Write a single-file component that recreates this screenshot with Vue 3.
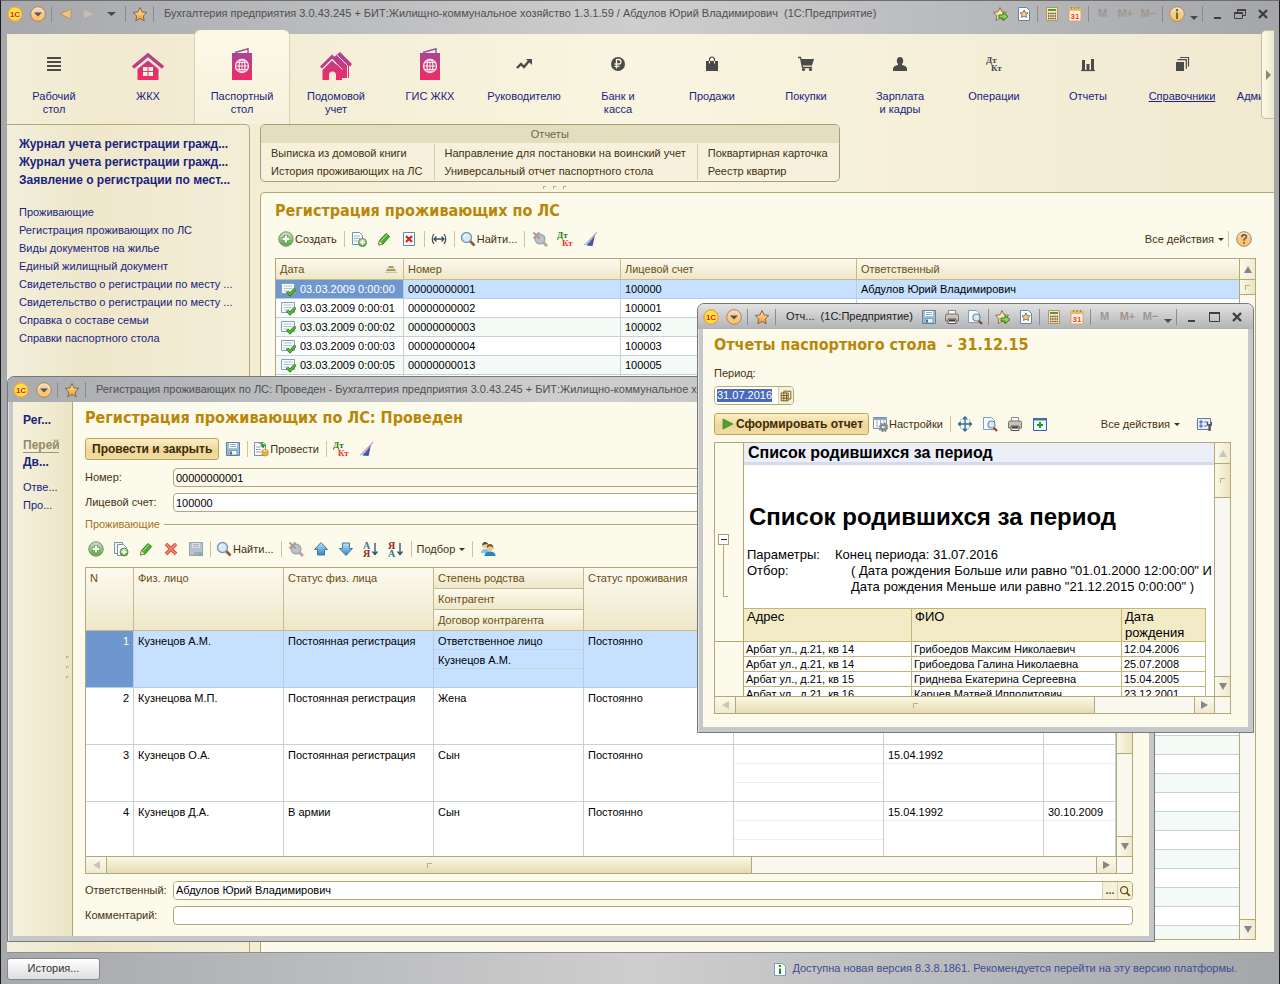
<script setup>
import { ref, onMounted } from 'vue'

const sections = [
  { title: 'Рабочий\nстол', icon: 'desk' },
  { title: 'ЖКХ', icon: 'house', big: true },
  { title: 'Паспортный\nстол', icon: 'passport', big: true, active: true },
  { title: 'Подомовой\nучет', icon: 'houses', big: true },
  { title: 'ГИС ЖКХ', icon: 'passport', big: true },
  { title: 'Руководителю', icon: 'trend' },
  { title: 'Банк и\nкасса', icon: 'ruble' },
  { title: 'Продажи', icon: 'bag' },
  { title: 'Покупки', icon: 'cart' },
  { title: 'Зарплата\nи кадры', icon: 'person' },
  { title: 'Операции', icon: 'dtkt-dark' },
  { title: 'Отчеты', icon: 'chart' },
  { title: 'Справочники', icon: 'books', hover: true },
  { title: 'Администриро-\nвание', icon: '' }
]

const mainLinks = [
  'Журнал учета регистрации гражд...',
  'Журнал учета регистрации гражд...',
  'Заявление о регистрации по мест...'
]
const links = [
  'Проживающие',
  'Регистрация проживающих по ЛС',
  'Виды документов на жилье',
  'Единый жилищный документ',
  'Свидетельство о регистрации по месту ...',
  'Свидетельство о регистрации по месту ...',
  'Справка о составе семьи',
  'Справки паспортного стола'
]

const reports = [
  ['Выписка из домовой книги', 'История проживающих на ЛС'],
  ['Направление для постановки на воинский учет', 'Универсальный отчет паспортного стола'],
  ['Поквартирная карточка', 'Реестр квартир']
]

const docs = [
  ['03.03.2009 0:00:00', '00000000001', '100000', 'Абдулов Юрий Владимирович'],
  ['03.03.2009 0:00:01', '00000000002', '100001', ''],
  ['03.03.2009 0:00:02', '00000000003', '100002', ''],
  ['03.03.2009 0:00:03', '00000000004', '100003', ''],
  ['03.03.2009 0:00:05', '00000000013', '100005', '']
]
while (docs.length < 35) docs.push(['', '', '', ''])

const people = [
  { name: 'Кузнецов А.М.', status: 'Постоянная регистрация', rel: 'Ответственное лицо', agent: 'Кузнецов А.М.', from: '', to: '' },
  { name: 'Кузнецова М.П.', status: 'Постоянная регистрация', rel: 'Жена', from: '', to: '' },
  { name: 'Кузнецов О.А.', status: 'Постоянная регистрация', rel: 'Сын', from: '15.04.1992', to: '' },
  { name: 'Кузнецов Д.А.', status: 'В армии', rel: 'Сын', from: '15.04.1992', to: '30.10.2009' }
]

const born = [
  ['Арбат ул., д.21, кв 14', 'Грибоедов Максим Николаевич', '12.04.2006'],
  ['Арбат ул., д.21, кв 14', 'Грибоедова Галина Николаевна', '25.07.2008'],
  ['Арбат ул., д.21, кв 15', 'Гриднева Екатерина Сергеевна', '15.04.2005'],
  ['Арбат ул., д.21, кв 16', 'Карцев Матвей Ипполитович', '23.12.2001']
]

const number = ref('00000000001')
const account = ref('100000')
const owner = ref('Абдулов Юрий Владимирович')
const comment = ref('')
const period = ref('31.07.2016')
const periodInput = ref(null)

onMounted(() => {
  periodInput.value.focus()
  periodInput.value.select()
})
</script>

<template>
  <svg class="sprite" aria-hidden="true">
    <defs>
      <linearGradient id="g-pink" x1="0" y1="0" x2="0" y2="32" gradientUnits="userSpaceOnUse">
        <stop offset="0" stop-color="#9a4a9c" />
        <stop offset="1" stop-color="#f22a66" />
      </linearGradient>
      <radialGradient id="g-orange" cx=".5" cy=".8" r=".8">
        <stop offset="0" stop-color="#ffc456" />
        <stop offset=".5" stop-color="#f6c78e" />
        <stop offset="1" stop-color="#f7e3cf" />
      </radialGradient>
      <radialGradient id="g-yellow">
        <stop offset="0" stop-color="#fff36a" />
        <stop offset=".8" stop-color="#ffdf30" />
        <stop offset="1" stop-color="#f5a35a" />
      </radialGradient>
      <linearGradient id="g-green" x1="0" y1="0" x2="0" y2="1">
        <stop offset="0" stop-color="#cfe3c4" />
        <stop offset="1" stop-color="#53a53a" />
      </linearGradient>
      <linearGradient id="g-star" x1="0" y1="0" x2="0" y2="1">
        <stop offset="0" stop-color="#ffe3ae" />
        <stop offset="1" stop-color="#f79a24" />
      </linearGradient>
      <linearGradient id="g-blue" x1="0" y1="0" x2="0" y2="1">
        <stop offset="0" stop-color="#bfe4f8" />
        <stop offset="1" stop-color="#2d86c4" />
      </linearGradient>

      <!-- sections -->
      <symbol id="desk" viewBox="0 0 16 16"><path d="M1 2h14M1 6h14M1 10h14M1 14h14" stroke="#4a4a4a" stroke-width="2" /></symbol>
      <symbol id="house" viewBox="0 0 32 32">
        <path d="M1 19.500 16 7l15 12.500" fill="none" stroke="url(#g-pink)" stroke-width="3.4" />
        <path d="M5.500 21 16 12.500 26.500 21v11h-21z" fill="url(#g-pink)" />
        <path d="M11 19h10v9H11z" fill="#fbf3d8" />
        <path d="M16 19v9M11 23.500h10" stroke="#cf3a7c" />
      </symbol>
      <symbol id="passport" viewBox="0 0 32 32">
        <path d="M6 5h20v27H6z" fill="url(#g-pink)" />
        <path d="M9 4.500 22 .8V5" fill="none" stroke="#9a4a9c" stroke-width="1.400" />
        <g fill="none" stroke="#fbeef0" stroke-width="1.300">
          <circle cx="16" cy="18" r="6.500" />
          <ellipse cx="16" cy="18" rx="3" ry="6.500" />
          <path d="M9.500 18h13M16 11.500v13M10.500 14.500h11M10.500 21.500h11" stroke-width=".9" />
        </g>
      </symbol>
      <symbol id="houses" viewBox="0 0 32 32">
        <path d="m14 9 6-5 12 12-2 2.500-1-1V30h-8z" fill="url(#g-pink)" />
        <path d="m17 7 10.500 10.500V31" fill="none" stroke="#fbe6ea" />
        <path d="M0 18.500 12 6.500l12.500 12-2 2.200L12 10.800 2 20.700z" fill="url(#g-pink)" />
        <path d="M1.800 21.500 12 11.500l10.500 10" fill="none" stroke="#fbe6ea" />
        <path d="M2.500 22 12 12.500l10 9.500v10h-6v-5q0-3.500-3.500-3.500T9 27v5H2.500z" fill="url(#g-pink)" />
      </symbol>
      <symbol id="trend" viewBox="0 0 16 16"><path d="m1 12 4-4 3 3 5-6" fill="none" stroke="#4a4a4a" stroke-width="2.400" /><path d="M10 3h6v6z" fill="#4a4a4a" /></symbol>
      <symbol id="ruble" viewBox="0 0 16 16"><circle cx="8" cy="8" r="7" fill="#4a4a4a" /><path d="M6.500 12.500v-9h2.300q2.200 0 2.200 2.300T8.800 8H4.500m0 2.300h5" fill="none" stroke="#f8f3dc" stroke-width="1.300" /></symbol>
      <symbol id="bag" viewBox="0 0 16 16"><path d="M2 5h12v10H2z" fill="#4a4a4a" /><path d="M5.500 8V4q0-3 2.500-3t2.500 3v4" fill="none" stroke="#4a4a4a" stroke-width="1.200" /><path d="M5.500 5v2.500m5-2.500v2.500" stroke="#f8f3dc" /></symbol>
      <symbol id="cart" viewBox="0 0 16 16"><path d="M0 1.500h2.500l2 10H14" fill="none" stroke="#4a4a4a" stroke-width="1.300" /><path d="M3 3h13l-2 6.500H4.500z" fill="#4a4a4a" /><circle cx="5.500" cy="13.500" r="1.600" fill="#4a4a4a" /><circle cx="12.500" cy="13.500" r="1.600" fill="#4a4a4a" /></symbol>
      <symbol id="person" viewBox="0 0 16 16"><ellipse cx="8" cy="4.800" rx="3.200" ry="3.800" fill="#4a4a4a" /><path d="M6 7.500h4v1.500q4.500.8 5 3.500v2.500H1v-2.500q.5-2.700 5-3.500z" fill="#4a4a4a" /></symbol>
      <symbol id="dtkt-dark" viewBox="0 0 16 16" font-family="Liberation Serif, serif" font-weight="bold" font-size="9" fill="#4a4a4a"><text x="0" y="7">Дт</text><text x="5" y="15">Кт</text></symbol>
      <symbol id="chart" viewBox="0 0 16 16"><path d="M1 14.500h14" stroke="#4a4a4a" stroke-width="1.200" /><path d="M2 4h3v10H2zm4.500 4h3v6h-3zM11 3h3v11h-3z" fill="#4a4a4a" /></symbol>
      <symbol id="books" viewBox="0 0 16 16"><path d="M2 6h8v9H2z" fill="#4a4a4a" /><path d="M3.500 3.700h8.800v9M6 1.500h8.500v9" fill="none" stroke="#4a4a4a" stroke-width="1.200" /></symbol>

      <!-- window captions -->
      <symbol id="logo" viewBox="0 0 16 16"><circle cx="8" cy="8" r="7.300" fill="url(#g-yellow)" stroke="#e9a05c" /><text x="8" y="11" text-anchor="middle" font-family="Liberation Sans, sans-serif" font-weight="bold" font-size="8" fill="#e3201b">1С</text></symbol>
      <symbol id="menu" viewBox="0 0 16 16"><circle cx="8" cy="8" r="7.300" fill="url(#g-orange)" stroke="#a8825c" /><path d="M4 6.500h8L8 10.500z" fill="#555" /></symbol>
      <symbol id="back" viewBox="0 0 16 16"><path d="M2 8 13 3v10z" fill="#f3c27a" stroke="#b5956a" /></symbol>
      <symbol id="forward" viewBox="0 0 16 16"><path d="M3 4v8l10-4z" fill="#c9bdb3" /></symbol>
      <symbol id="tri" viewBox="0 0 16 16"><path d="M3 6h9L7.500 10z" fill="#4a4a4a" /></symbol>
      <symbol id="tri-low" viewBox="0 0 12 16"><path d="M2 10h8l-4 4z" fill="#4a4a4a" /></symbol>
      <symbol id="star" viewBox="0 0 16 16"><path d="m8 1.500 2 4.400 4.800.6-3.500 3.400.9 4.900L8 12.400l-4.200 2.400.9-4.900L1.200 6.500 6 5.900z" fill="url(#g-star)" stroke="#7d6a50" /></symbol>
      <symbol id="star-go" viewBox="0 0 16 16"><path d="m7 1.500 2 4.200 4.600.6-3.500 3.300.9 4.900-4-2.300-4 2.300.9-4.900L.6 6.300l4.500-.6z" fill="#fbe3ae" stroke="#867556" /><path d="M6 9h4V6.500l5 4-5 4V12H6z" fill="#8ed44e" stroke="#2f7d1a" /></symbol>
      <symbol id="star-page" viewBox="0 0 16 16"><path d="M2.500 1.500h8l3 3v10h-11z" fill="#fff" stroke="#5f87a8" /><path d="m8 4 1.200 2.600 2.800.3L10 8.800l.5 2.700L8 10.200l-2.500 1.300.5-2.700-2-1.900 2.800-.3z" fill="#f7cf84" stroke="#6e5c3c" stroke-width=".8" /></symbol>
      <symbol id="calc" viewBox="0 0 16 16"><path d="M2.500 1.500h11v13h-11z" fill="#f7e6c0" stroke="#b59464" /><path d="M4 3h8v2H4z" fill="#4f9a35" /><path d="M4 7.500h8M4 10h8M4 12.500h8" stroke="#604c2c" stroke-width="1.400" stroke-dasharray="1.400 .8" /></symbol>
      <symbol id="cal" viewBox="0 0 16 16"><path d="M2 2h12v13H2z" fill="#fff4e2" stroke="#d3a564" /><path d="M2 2h12v3H2z" fill="#f0b765" /><path d="M4.500 1v2M8 1v2m3.500-2v2" stroke="#a97b3c" /><text x="8" y="13" text-anchor="middle" font-family="Liberation Sans, sans-serif" font-weight="bold" font-size="8" fill="#f0441c">31</text></symbol>
      <symbol id="info" viewBox="0 0 16 16"><circle cx="8" cy="8" r="7.300" fill="url(#g-orange)" stroke="#b08a55" /><path d="M8 3v2.200M8 6.500V13" stroke="#5b7d22" stroke-width="2" /></symbol>
      <symbol id="min" viewBox="0 0 16 16"><path d="M5 12h7" stroke="#3f3f3f" stroke-width="2" /></symbol>
      <symbol id="restore" viewBox="0 0 16 16"><path d="M5.500 7V3.500h8v6H11M2.500 6.500h8v6h-8z" fill="none" stroke="#3f3f3f" /><path d="M5 4h9M2 7h9" stroke="#3f3f3f" stroke-width="2" /></symbol>
      <symbol id="max" viewBox="0 0 16 16"><path d="M3.500 3.500h10v9h-10z" fill="none" stroke="#3f3f3f" /><path d="M3 4h11" stroke="#3f3f3f" stroke-width="2" /></symbol>
      <symbol id="close" viewBox="0 0 16 16"><path d="m4 4 8 8m0-8-8 8" stroke="#3f3f3f" stroke-width="2.400" /></symbol>

      <!-- commands -->
      <symbol id="add" viewBox="0 0 16 16"><circle cx="8" cy="8" r="7.200" fill="url(#g-green)" stroke="#77906b" /><path d="M8 4v8M4 8h8" stroke="#5c8c4a" stroke-width="4" /><path d="M8 4.500v7M4.500 8h7" stroke="#fff" stroke-width="2.400" /></symbol>
      <symbol id="copy" viewBox="0 0 16 16"><path d="M1.500 1.500h7l3 3v9h-10z" fill="#f5fafd" stroke="#7396b0" /><path d="M3 5h6M3 7.500h6M3 10h4" stroke="#9fb4c4" /><circle cx="11.500" cy="11.500" r="4" fill="url(#g-green)" stroke="#5f8b4e" /><path d="M11.500 9v5M9 11.500h5" stroke="#fff" stroke-width="1.500" /></symbol>
      <symbol id="copy2" viewBox="0 0 16 16"><path d="M1.500 1.500h8v11h-8z" fill="#eef5fa" stroke="#7396b0" /><path d="M4.500 3.500h6l3 3v8h-9z" fill="#fff" stroke="#7396b0" /><circle cx="11" cy="11" r="4" fill="url(#g-green)" stroke="#5f8b4e" /><path d="M11 8.500v5M8.500 11h5" stroke="#fff" stroke-width="1.500" /></symbol>
      <symbol id="edit" viewBox="0 0 16 16"><path d="m3.500 9.500 6.500-7 3.500 3-6.500 7.500-4.500 1z" fill="#46b52a" stroke="#2a7d17" /><path d="m5 10 6-6.500" stroke="#a6e88c" /><path d="m3.500 9.500 3.500 3.500-4.500 1z" fill="#f1dfb5" stroke="#7a6a40" stroke-width=".5" /></symbol>
      <symbol id="delete-page" viewBox="0 0 16 16"><path d="M2.500 1.500h11v13h-11z" fill="#fff" stroke="#5f87a8" /><path d="m5 5 6 6m0-6-6 6" stroke="#d22a1c" stroke-width="2.400" /></symbol>
      <symbol id="delete" viewBox="0 0 16 16"><path d="m3 3 10 10m0-10L3 13" stroke="#d23f2e" stroke-width="3.600" /><path d="m3 3 10 10m0-10L3 13" stroke="#f6806c" stroke-width="1.800" /></symbol>
      <symbol id="interval" viewBox="0 0 16 16"><path d="M3 3Q-.5 8 3 13M13 3q3.500 5 0 10" fill="none" stroke="#3c4c5a" stroke-width="1.200" /><path d="M3 8h10M5.500 5.500 3 8l2.500 2.500m5-5L13 8l-2.500 2.500" fill="none" stroke="#3c4c5a" stroke-width="1.300" /></symbol>
      <symbol id="find" viewBox="0 0 16 16"><path d="m10 10 4.500 4.500" stroke="#8c5a3c" stroke-width="2.600" /><circle cx="6.500" cy="6.500" r="5" fill="#d4eaf7" stroke="#7d97b4" stroke-width="1.400" /><path d="M4 6q.5-2 2.500-2.500" stroke="#fff" fill="none" /></symbol>
      <symbol id="find-off" viewBox="0 0 16 16"><path d="m10 10 5 5" stroke="#b8a79c" stroke-width="3" /><circle cx="8" cy="8" r="4.800" fill="#bcc3c8" stroke="#9fa8b0" stroke-width="1.400" /><path d="m1.500 1.500 6 6m0-6-6 6" stroke="#b09a94" stroke-width="2" /></symbol>
      <symbol id="dtkt" viewBox="0 0 16 16" font-family="Liberation Serif, serif" font-weight="bold" font-size="9"><text x="0" y="7" fill="#1f7a12">Дт</text><text x="5" y="15" fill="#f0352c">Кт</text></symbol>
      <symbol id="plane" viewBox="0 0 16 16"><path d="M15 1 2 14l4-1.500z" fill="#c8c6e2" stroke="#a99cc4" stroke-width=".6" /><path d="M13 4 4.500 14.500l6 .5z" fill="#3a56a4" /><path d="M15 1 7 12" stroke="#e58d9a" stroke-width=".8" /></symbol>
      <symbol id="help" viewBox="0 0 16 16"><circle cx="8" cy="8" r="7.300" fill="url(#g-orange)" stroke="#a8825c" /><path d="M5.800 6.200q0-2.400 2.300-2.400t2.300 2Q10.400 7 9 7.700T8 9.700M8 11v1.800" fill="none" stroke="#74501e" stroke-width="1.500" /></symbol>
      <symbol id="save" viewBox="0 0 16 16"><path d="M1.500 1.500h13v13h-13z" fill="#9fbfd6" stroke="#5d839f" /><path d="M4 2h8v5H4z" fill="#fff" /><path d="M5 3.500h6M5 5.500h6" stroke="#9ab" /><path d="M4 9.500h8V14H4z" fill="#eef3f7" stroke="#5d839f" stroke-width=".7" /><path d="M6 10.500v3" stroke="#47708e" stroke-width="2" /></symbol>
      <symbol id="save-off" viewBox="0 0 16 16"><path d="M1.500 1.500h13v13h-13z" fill="#b5c3cd" stroke="#98a9b6" /><path d="M4 2h8v5H4z" fill="#d8dfe3" /><path d="M5 3.500h6M5 5.500h6" stroke="#a9b5be" /><text x="6" y="15" font-family="Liberation Sans, sans-serif" font-weight="bold" font-size="6" fill="#8797a4">OK</text></symbol>
      <symbol id="post" viewBox="0 0 16 16"><path d="M1.500 1.500h9l2 2v11h-11z" fill="#fff" stroke="#7396b0" /><path d="M3 6h5M3 8.500h5M3 11h5" stroke="#93a7b5" /><path d="M5 2.500q4-2 6 1h2l-3 4-3-4h2Q8 2 5 2.500z" fill="#2f9a22" /><path d="M9 10v4q3 2 6 0v-4z" fill="#efba3c" stroke="#b8842a" stroke-width=".7" /><ellipse cx="12" cy="10" rx="3" ry="1.400" fill="#ffe07a" stroke="#b8842a" stroke-width=".7" /></symbol>
      <symbol id="up" viewBox="0 0 16 16"><path d="m8 1.500 6.500 7h-3V14h-7V8.500h-3z" fill="url(#g-blue)" stroke="#4179a4" /></symbol>
      <symbol id="down" viewBox="0 0 16 16"><path d="m8 14.500 6.500-7h-3V2h-7v5.500h-3z" fill="url(#g-blue)" stroke="#4179a4" /></symbol>
      <symbol id="sort-az" viewBox="0 0 16 16" font-family="Liberation Serif, serif" font-weight="bold" font-size="10"><text x="0" y="7.500" fill="#33799c">А</text><text x="0" y="15.500" fill="#a02222">Я</text><path d="M12 2v11M9.500 10.500 12 13.500l2.500-3" fill="none" stroke="#2c4c62" stroke-width="1.300" /></symbol>
      <symbol id="sort-za" viewBox="0 0 16 16" font-family="Liberation Serif, serif" font-weight="bold" font-size="10"><text x="0" y="7.500" fill="#a02222">Я</text><text x="0" y="15.500" fill="#33799c">А</text><path d="M12 2v11M9.500 10.500 12 13.500l2.500-3" fill="none" stroke="#2c4c62" stroke-width="1.300" /></symbol>
      <symbol id="people" viewBox="0 0 16 16"><path d="M1 12q0-4 4-4t4 4z" fill="#7dc3ea" /><circle cx="5" cy="4.500" r="2.600" fill="#f3d0a4" /><path d="M2.300 5q-.3-4 2.700-4t3 2.500Q4 2.500 2.300 5z" fill="#5a4630" /><path d="M4.500 15q0-4.500 5.500-4.500t5.500 4.500z" fill="#2c86c4" /><circle cx="10" cy="7" r="3.100" fill="#f5c486" /><path d="M6.800 7.500q-.5-4.500 3.200-4.500t3.300 4.500Q12.500 5 10 5.200T6.800 7.500z" fill="#7c512c" /></symbol>
      <symbol id="doc" viewBox="0 0 16 16"><path d="M1.500 2.500h13v10h-13z" fill="#f8fbfd" stroke="#8ba0b4" /><path d="M3.500 5h9M3.500 7.500h9M3.500 10h4" stroke="#b4c4d2" /><path d="m7 10.500 3 3 5.500-6" fill="none" stroke="#2e7d18" stroke-width="3" /><path d="m7 10.500 3 3 5.500-6" fill="none" stroke="#5cc23a" stroke-width="1.400" /></symbol>
      <symbol id="print" viewBox="0 0 16 16"><path d="M4.500 1.500h7V6h-7z" fill="#fff" stroke="#8a8a8a" /><path d="M1.500 6.500Q1.500 5 3 5h10q1.500 0 1.500 1.500V12h-13z" fill="#c9c3bc" stroke="#77706a" /><path d="M4 10h8v4.500H4z" fill="#f4f4f4" stroke="#5a5550" /><path d="M5 11.500h6" stroke="#40362f" stroke-width="2" /></symbol>
      <symbol id="preview" viewBox="0 0 16 16"><path d="M1.500 1.500h8l3 3v9h-11z" fill="#f5fafd" stroke="#7ba0ba" /><path d="m11.500 11.500 3.500 3.500" stroke="#8c4a34" stroke-width="2.400" /><circle cx="9.500" cy="8.500" r="3.500" fill="#d6e8f2" stroke="#7b8894" stroke-width="1.200" /></symbol>
      <symbol id="settings" viewBox="0 0 16 16"><path d="M1.500 1.500h13v11h-13z" fill="#fff" stroke="#7690ac" /><path d="M1 3h14" stroke="#8ea8c4" stroke-width="2" /><path d="M5 2v11M8.500 2v11M12 2v11" stroke="#93a7c0" /><circle cx="11.500" cy="11.500" r="2.800" fill="none" stroke="#85898c" stroke-width="2" /><circle cx="11.500" cy="11.500" r="4.200" fill="none" stroke="#85898c" stroke-width="1.500" stroke-dasharray="1.700 1.600" /></symbol>
      <symbol id="cross" viewBox="0 0 16 16"><path d="M3.500 3.500h9v9h-9z" fill="none" stroke="#a9bccb" stroke-dasharray="2 1" /><path d="M8 1v14M1.500 8h13M6 3l2-2 2 2M6 13l2 2 2-2M3.500 6l-2 2 2 2m9-4 2 2-2 2" fill="none" stroke="#2b6f98" stroke-width="1.300" /></symbol>
      <symbol id="plus-box" viewBox="0 0 16 16"><path d="M1.500 2.500h13v12h-13z" fill="#eef8fc" stroke="#2c6a92" /><path d="M1 3.500h14" stroke="#3a7aa2" stroke-width="2" /><path d="M8 6v6M5 9h6" stroke="#2b9420" stroke-width="2" /></symbol>
      <symbol id="form" viewBox="0 0 16 16"><path d="M1.500 2.500h13v11h-13z" fill="#e9eef8" stroke="#5f79a8" /><path d="M4 5h2v2H4zm0 4h2v2H4z" fill="none" stroke="#41599c" /><path d="M8 6h4M8 10h3" stroke="#5f79a8" /><path d="M13.500 8v7" stroke="#555" stroke-width="2.200" /><path d="M11.500 6v3h4V6" fill="none" stroke="#555" stroke-width="1.400" /></symbol>
      <symbol id="news" viewBox="0 0 16 16"><path d="M2.500 2.500h8l3 3v9h-11z" fill="#fff" stroke="#7d9cb8" /><path d="M8 4v2M8 7.500V13" stroke="#2f8a1a" stroke-width="2.200" fill="none" /></symbol>
      <symbol id="pick" viewBox="0 0 16 16"><path d="M5.500 2.500h8v9h-8z" fill="#f5efce" stroke="#6a500f" /><path d="M2.500 4.500h8v9h-8z" fill="#f5efce" stroke="#6a500f" /><path d="M2.500 7.500h8m-8 3h8M5.500 4.500v9m3-9v9" stroke="#6a500f" /></symbol>
      <symbol id="open" viewBox="0 0 16 16"><circle cx="7" cy="7" r="4" fill="none" stroke="#6a500f" stroke-width="1.500" /><path d="m9.500 9.500 4 4" stroke="#6a500f" stroke-width="2" /></symbol>
      <symbol id="play" viewBox="0 0 16 16"><path d="m3 3 10 5-10 5z" fill="#4da12c" stroke="#2c7a1c" stroke-width=".6" /></symbol>
    </defs>
  </svg>

  <div class="app">
    <header class="caption main-caption">
      <button class="cb" aria-label="1С"><svg><use href="#logo" /></svg></button>
      <button class="cb" aria-label="Меню"><svg><use href="#menu" /></svg></button>
      <i class="sep"></i>
      <button class="cb" aria-label="Назад"><svg><use href="#back" /></svg></button>
      <button class="cb" aria-label="Вперед"><svg><use href="#forward" /></svg></button>
      <button class="cb" aria-label="История переходов"><svg><use href="#tri" /></svg></button>
      <i class="sep"></i>
      <button class="cb" aria-label="Избранное"><svg><use href="#star" /></svg></button>
      <i class="sep"></i>
      <span class="caption-text">Бухгалтерия предприятия 3.0.43.245 + БИТ:Жилищно-коммунальное хозяйство 1.3.1.59 / Абдулов Юрий Владимирович&nbsp; (1С:Предприятие)</span>
      <button class="cb" aria-label="Добавить в избранное"><svg><use href="#star-go" /></svg></button>
      <button class="cb" aria-label="Ссылка"><svg><use href="#star-page" /></svg></button>
      <i class="sep"></i>
      <button class="cb" aria-label="Калькулятор"><svg><use href="#calc" /></svg></button>
      <button class="cb" aria-label="Календарь"><svg><use href="#cal" /></svg></button>
      <i class="sep"></i>
      <button class="cb mem">M</button>
      <button class="cb mem">M+</button>
      <button class="cb mem">M−</button>
      <i class="sep"></i>
      <button class="cb" aria-label="Информация"><svg><use href="#info" /></svg></button>
      <button class="cb narrow" aria-label="Еще"><svg><use href="#tri-low" /></svg></button>
      <i class="sep"></i>
      <button class="cb" aria-label="Свернуть"><svg><use href="#min" /></svg></button>
      <button class="cb" aria-label="Восстановить"><svg><use href="#restore" /></svg></button>
      <button class="cb" aria-label="Закрыть"><svg><use href="#close" /></svg></button>
    </header>

    <nav class="sections">
      <div class="tabs">
        <a v-for="s in sections" :key="s.title" href="#" class="tab" :class="{ active: s.active, hover: s.hover }">
          <span class="tab-icon"><svg v-if="s.icon" :class="{ big: s.big }"><use :href="'#' + s.icon" /></svg></span>
          <span class="tab-label">{{ s.title }}</span>
        </a>
      </div>
      <button class="tabs-next" aria-label="Дальше"></button>
    </nav>

    <div class="workspace">
      <aside class="side">
        <a v-for="(l, i) in mainLinks" :key="i" href="#" class="strong">{{ l }}</a>
        <div class="gap"></div>
        <a v-for="(l, i) in links" :key="'l' + i" href="#">{{ l }}</a>
      </aside>

      <div class="right">
        <section class="commands">
          <h2>Отчеты</h2>
          <div class="command-cols">
            <div v-for="(col, i) in reports" :key="i" class="command-col">
              <a v-for="r in col" :key="r" href="#">{{ r }}</a>
            </div>
          </div>
        </section>
        <div class="split"><i></i><i></i><i></i></div>

        <main class="list">
          <h1>Регистрация проживающих по ЛС</h1>
          <div class="bar">
            <button class="tb text"><svg><use href="#add" /></svg>Создать</button>
            <i class="sep"></i>
            <button class="tb" aria-label="Скопировать"><svg><use href="#copy" /></svg></button>
            <button class="tb" aria-label="Изменить"><svg><use href="#edit" /></svg></button>
            <button class="tb" aria-label="Пометить на удаление"><svg><use href="#delete-page" /></svg></button>
            <i class="sep"></i>
            <button class="tb" aria-label="Интервал"><svg><use href="#interval" /></svg></button>
            <i class="sep"></i>
            <button class="tb text"><svg><use href="#find" /></svg>Найти...</button>
            <i class="sep"></i>
            <button class="tb" aria-label="Отменить поиск"><svg><use href="#find-off" /></svg></button>
            <button class="tb" aria-label="Проводки"><svg><use href="#dtkt" /></svg></button>
            <button class="tb" aria-label="Отправить"><svg><use href="#plane" /></svg></button>
            <span class="fill"></span>
            <button class="tb text drop">Все действия<b class="caret"></b></button>
            <i class="sep"></i>
            <button class="tb" aria-label="Справка"><svg><use href="#help" /></svg></button>
          </div>

          <div class="grid-box">
            <div class="grid-view">
              <table class="docs">
                <colgroup><col class="c-date" /><col class="c-num" /><col class="c-acc" /><col /></colgroup>
                <thead>
                  <tr>
                    <th><span class="sorted">Дата<i></i></span></th>
                    <th>Номер</th>
                    <th>Лицевой счет</th>
                    <th>Ответственный</th>
                  </tr>
                </thead>
                <tbody>
                  <tr v-for="(d, i) in docs" :key="i" :class="{ picked: i === 0 }">
                    <td><span v-if="d[0]" class="date"><svg><use href="#doc" /></svg>{{ d[0] }}</span></td>
                    <td>{{ d[1] }}</td>
                    <td>{{ d[2] }}</td>
                    <td>{{ d[3] }}</td>
                  </tr>
                </tbody>
              </table>
            </div>
            <div class="vscroll">
              <button class="arrow up" aria-label="Вверх"></button>
              <span class="thumb short"></span>
              <span class="track"></span>
              <button class="arrow down" aria-label="Вниз"></button>
            </div>
          </div>
        </main>
      </div>
    </div>

    <footer class="status">
      <button class="history">История...</button>
      <a href="#" class="news"><svg><use href="#news" /></svg>Доступна новая версия 8.3.8.1861. Рекомендуется перейти на эту версию платформы.</a>
    </footer>

    <!-- document window -->
    <section class="window doc-window">
      <header class="caption">
        <button class="cb" aria-label="1С"><svg><use href="#logo" /></svg></button>
        <button class="cb" aria-label="Меню"><svg><use href="#menu" /></svg></button>
        <i class="sep"></i>
        <button class="cb" aria-label="Избранное"><svg><use href="#star" /></svg></button>
        <i class="sep"></i>
        <span class="caption-text">Регистрация проживающих по ЛС: Проведен - Бухгалтерия предприятия 3.0.43.245 + БИТ:Жилищно-коммунальное хозяйство 1.3.1.59</span>
      </header>
      <div class="window-body doc-body">
        <aside class="doc-side">
          <a href="#" class="strong">Рег...</a>
          <span class="goto">Перейти</span>
          <a href="#" class="strong">Дв...</a>
          <a href="#" class="apart">Отве...</a>
          <a href="#">Про...</a>
          <div class="grip"><i></i><i></i><i></i></div>
        </aside>
        <div class="doc-form">
          <h1>Регистрация проживающих по ЛС: Проведен</h1>
          <div class="bar form-bar">
            <button class="primary">Провести и закрыть</button>
            <button class="tb" aria-label="Записать"><svg><use href="#save" /></svg></button>
            <i class="sep"></i>
            <button class="tb text"><svg><use href="#post" /></svg>Провести</button>
            <i class="sep"></i>
            <button class="tb" aria-label="Проводки"><svg><use href="#dtkt" /></svg></button>
            <button class="tb" aria-label="Отправить"><svg><use href="#plane" /></svg></button>
          </div>
          <div class="field"><label for="number">Номер:</label><input id="number" v-model="number" class="readonly" /></div>
          <div class="field"><label for="account">Лицевой счет:</label><input id="account" v-model="account" /></div>
          <h3>Проживающие</h3>
          <div class="bar people-bar">
            <button class="tb" aria-label="Добавить"><svg><use href="#add" /></svg></button>
            <button class="tb" aria-label="Скопировать"><svg><use href="#copy2" /></svg></button>
            <button class="tb" aria-label="Изменить"><svg><use href="#edit" /></svg></button>
            <button class="tb" aria-label="Удалить"><svg><use href="#delete" /></svg></button>
            <button class="tb" aria-label="Закончить"><svg><use href="#save-off" /></svg></button>
            <i class="sep"></i>
            <button class="tb text"><svg><use href="#find" /></svg>Найти...</button>
            <i class="sep"></i>
            <button class="tb" aria-label="Отменить поиск"><svg><use href="#find-off" /></svg></button>
            <button class="tb" aria-label="Вверх"><svg><use href="#up" /></svg></button>
            <button class="tb" aria-label="Вниз"><svg><use href="#down" /></svg></button>
            <button class="tb" aria-label="По возрастанию"><svg><use href="#sort-az" /></svg></button>
            <button class="tb" aria-label="По убыванию"><svg><use href="#sort-za" /></svg></button>
            <i class="sep"></i>
            <button class="tb text">Подбор<b class="caret"></b></button>
            <i class="sep"></i>
            <button class="tb" aria-label="Жильцы"><svg><use href="#people" /></svg></button>
          </div>

          <div class="people-box">
            <div class="grid-box">
              <div class="grid-view">
                <table class="people">
                  <colgroup>
                    <col class="c-n" /><col class="c-p" /><col class="c-p" /><col class="c-p" /><col class="c-p" /><col class="c-p" /><col class="c-to" /><col />
                  </colgroup>
                  <thead>
                    <tr>
                      <th rowspan="3">N</th>
                      <th rowspan="3">Физ. лицо</th>
                      <th rowspan="3">Статус физ. лица</th>
                      <th>Степень родства</th>
                      <th rowspan="3">Статус проживания</th>
                      <th rowspan="3"></th>
                      <th rowspan="3"></th>
                      <th rowspan="3"></th>
                    </tr>
                    <tr><th>Контрагент</th></tr>
                    <tr><th>Договор контрагента</th></tr>
                  </thead>
                  <tbody>
                    <tr v-for="(p, i) in people" :key="i" :class="{ picked: i === 0 }">
                      <td class="n">{{ i + 1 }}</td>
                      <td>{{ p.name }}</td>
                      <td>{{ p.status }}</td>
                      <td :class="{ lined: i === 0 }"><p>{{ p.rel }}</p><p>{{ p.agent }}</p></td>
                      <td>Постоянно</td>
                      <td class="lined"><p></p><p></p></td>
                      <td class="lined"><p>{{ p.from }}</p></td>
                      <td class="lined"><p>{{ p.to }}</p></td>
                    </tr>
                  </tbody>
                </table>
              </div>
              <div class="vscroll">
                <button class="arrow up" aria-label="Вверх"></button>
                <span class="thumb tall"></span>
                <span class="track"></span>
                <button class="arrow down" aria-label="Вниз"></button>
              </div>
            </div>
            <div class="hscroll">
              <button class="arrow left off" aria-label="Влево"></button>
              <span class="thumb wide"></span>
              <span class="track"></span>
              <button class="arrow right-arrow" aria-label="Вправо"></button>
              <span class="corner"></span>
            </div>
          </div>

          <div class="field foot">
            <label for="owner">Ответственный:</label>
            <div class="combo">
              <input id="owner" v-model="owner" />
              <button class="dots">...</button>
              <button aria-label="Открыть"><svg><use href="#open" /></svg></button>
            </div>
          </div>
          <div class="field"><label for="comment">Комментарий:</label><input id="comment" v-model="comment" /></div>
        </div>
      </div>
    </section>

    <!-- report window -->
    <section class="window report-window">
      <header class="caption light">
        <button class="cb" aria-label="1С"><svg><use href="#logo" /></svg></button>
        <button class="cb" aria-label="Меню"><svg><use href="#menu" /></svg></button>
        <i class="sep"></i>
        <button class="cb" aria-label="Избранное"><svg><use href="#star" /></svg></button>
        <i class="sep"></i>
        <span class="caption-text">Отч...&nbsp; (1С:Предприятие)</span>
        <button class="cb" aria-label="Сохранить"><svg><use href="#save" /></svg></button>
        <button class="cb" aria-label="Печать"><svg><use href="#print" /></svg></button>
        <button class="cb" aria-label="Просмотр"><svg><use href="#preview" /></svg></button>
        <i class="sep"></i>
        <button class="cb" aria-label="Добавить в избранное"><svg><use href="#star-go" /></svg></button>
        <button class="cb" aria-label="Ссылка"><svg><use href="#star-page" /></svg></button>
        <i class="sep"></i>
        <button class="cb" aria-label="Калькулятор"><svg><use href="#calc" /></svg></button>
        <button class="cb" aria-label="Календарь"><svg><use href="#cal" /></svg></button>
        <i class="sep"></i>
        <button class="cb mem">M</button>
        <button class="cb mem">M+</button>
        <button class="cb mem">M−</button>
        <button class="cb narrow" aria-label="Еще"><svg><use href="#tri-low" /></svg></button>
        <i class="sep"></i>
        <button class="cb" aria-label="Свернуть"><svg><use href="#min" /></svg></button>
        <button class="cb" aria-label="Развернуть"><svg><use href="#max" /></svg></button>
        <button class="cb" aria-label="Закрыть"><svg><use href="#close" /></svg></button>
      </header>
      <div class="window-body report-body">
        <h1>Отчеты паспортного стола&nbsp; - 31.12.15</h1>
        <label for="period" class="period-label">Период:</label>
        <div class="combo period">
          <input id="period" ref="periodInput" v-model="period" />
          <button aria-label="Выбрать"><svg><use href="#pick" /></svg></button>
        </div>
        <div class="bar report-bar">
          <button class="primary"><svg><use href="#play" /></svg>Сформировать отчет</button>
          <button class="tb text"><svg><use href="#settings" /></svg>Настройки</button>
          <i class="sep"></i>
          <button class="tb" aria-label="Размер"><svg><use href="#cross" /></svg></button>
          <button class="tb" aria-label="Просмотр"><svg><use href="#preview" /></svg></button>
          <button class="tb" aria-label="Печать"><svg><use href="#print" /></svg></button>
          <button class="tb" aria-label="Новое окно"><svg><use href="#plus-box" /></svg></button>
          <span class="fill"></span>
          <button class="tb text drop">Все действия<b class="caret"></b></button>
          <button class="tb form-btn" aria-label="Настройка формы"><svg><use href="#form" /></svg></button>
        </div>

        <div class="sheet-box">
          <div class="sheet-row">
            <div class="gutter">
              <div class="gutter-top">
                <button class="fold" aria-label="Свернуть группу"></button>
                <span class="bracket"></span>
              </div>
            </div>
            <div class="sheet">
              <div class="pinned">Список родившихся за период</div>
              <h2>Список родившихся за период</h2>
              <dl>
                <dt>Параметры:</dt>
                <dd>Конец периода: 31.07.2016</dd>
                <dt>Отбор:</dt>
                <dd class="deep">( Дата рождения Больше или равно "01.01.2000 12:00:00" И<br />Дата рождения Меньше или равно "21.12.2015 0:00:00" )</dd>
              </dl>
              <table class="born">
                <colgroup><col class="c-addr" /><col class="c-fio" /><col class="c-born" /></colgroup>
                <thead>
                  <tr><th>Адрес</th><th>ФИО</th><th>Дата рождения</th></tr>
                </thead>
                <tbody>
                  <tr v-for="(b, i) in born" :key="i"><td>{{ b[0] }}</td><td>{{ b[1] }}</td><td>{{ b[2] }}</td></tr>
                </tbody>
              </table>
            </div>
            <div class="vscroll">
              <button class="arrow up off" aria-label="Вверх"></button>
              <span class="thumb mid"></span>
              <span class="track"></span>
              <button class="arrow down" aria-label="Вниз"></button>
            </div>
          </div>
          <div class="hscroll">
            <button class="arrow left off" aria-label="Влево"></button>
            <span class="thumb wide"></span>
            <span class="track"></span>
            <button class="arrow right-arrow" aria-label="Вправо"></button>
            <span class="corner"></span>
          </div>
        </div>
      </div>
    </section>
  </div>
</template>

<style>
body {
  margin: 0;
  overflow: hidden;
}
</style>

<style scoped>
* {
  box-sizing: border-box;
}

.sprite {
  position: absolute;
  width: 0;
  height: 0;
}

.app {
  position: relative;
  display: flex;
  flex-direction: column;
  height: 100vh;
  padding: 0 5px 0 6px;
  overflow: hidden;
  font: 11px/13px 'Liberation Sans', Arial, sans-serif;
  color: #44310f;
  background: linear-gradient(90deg, #a6a8ac, #cecece 50%, #a4a6aa);
  border: solid #1c1c1c;
  border-width: 1px 1px 0;
  border-top-color: #6d6d6d;
}

svg {
  flex: none;
  width: 16px;
  height: 16px;
}

button {
  padding: 0;
  border: 0;
  background: none;
  font: inherit;
  color: inherit;
}

a {
  color: #1a237e;
  text-decoration: none;
}

h1,
h2,
h3,
p,
dl,
dd {
  margin: 0;
}

h1 {
  flex: none;
  font: bold 16px/20px 'DejaVu Sans Condensed', 'Noto Sans', sans-serif;
  color: #b98708;
  white-space: nowrap;
}

/* captions */
.caption {
  display: flex;
  flex: none;
  align-items: center;
  height: 25px;
  padding: 0 5px 0 1px;
  background: linear-gradient(90deg, #a9abaf, #cfcfcf 50%, #a9abaf);
  color: #505050;
}

.main-caption {
  height: 29px;
  padding: 0 0 4px;
  margin-left: -4px;
  background: none;
}

.caption.light {
  background: linear-gradient(#e2e2e2, #b2b3b6);
  color: #222;
}

.caption-text {
  flex: 1;
  min-width: 0;
  padding-left: 8px;
  overflow: hidden;
  white-space: nowrap;
}

.cb {
  display: flex;
  flex: none;
  align-items: center;
  justify-content: center;
  width: 23px;
  height: 20px;
}

.cb.narrow {
  width: 12px;
}

.narrow svg {
  width: 12px;
}

.mem {
  font-weight: bold;
  color: #a0968f;
}

.sep {
  flex: none;
  width: 1px;
  height: 16px;
  margin: 0 2px;
  background: #8b8c8f;
}

/* sections */
.sections {
  display: flex;
  flex: none;
  height: 94px;
  background: linear-gradient(90deg, #f3eed8, #f1ead0 8%, #f9f5e0 50%, #f1e9d0) no-repeat 0 4px;
}

.tabs {
  display: flex;
  flex: 1;
  min-width: 0;
  overflow: hidden;
}

.tab {
  display: flex;
  flex: none;
  flex-direction: column;
  align-items: center;
  width: 94px;
  padding-top: 18px;
}

.tab.active {
  background: linear-gradient(#fbf9e6, #f6f1dc);
  border-radius: 6px 6px 0 0;
  box-shadow: 0 0 1px 1px #d8d2b4;
}

.tab-icon {
  display: flex;
  align-items: center;
  justify-content: center;
  width: 32px;
  height: 32px;
}

.tab-icon .big {
  width: 32px;
  height: 32px;
}

.tab-label {
  margin-top: 10px;
  text-align: center;
  white-space: pre;
}

.hover .tab-label {
  text-decoration: underline;
}

.tabs-next {
  display: flex;
  align-items: center;
  justify-content: center;
  width: 13px;
  height: 89px;
  background: linear-gradient(90deg, #fbf9e8, #efe8cc);
  border: 1px solid #c2bda8;
  border-right: 0;
  border-radius: 5px 0 0 5px;
}

.tabs-next::after {
  border: 5px solid transparent;
  border-left-color: #8c8870;
  border-right: 0;
  content: '';
}

/* workspace */
.workspace {
  display: flex;
  flex: 1;
  gap: 10px;
  min-height: 0;
  background: linear-gradient(90deg, #f3eed8, #f1ead0 8%, #f9f5e0 50%, #f1e9d0);
}

.side {
  display: flex;
  flex: none;
  flex-direction: column;
  width: 243px;
  padding: 10px 10px 0 12px;
  border: solid #b3a876;
  border-width: 1px 1px 0 0;
  border-radius: 0 5px 0 0;
  background: linear-gradient(90deg, #f3efdc, #eee7cb 30%, #f4eed8);
  line-height: 18px;
  white-space: nowrap;
}

.strong {
  font-size: 12px;
  font-weight: bold;
}

.side .gap {
  height: 14px;
}

.right {
  display: flex;
  flex: 1;
  flex-direction: column;
  min-width: 0;
}

.commands {
  align-self: flex-start;
  overflow: hidden;
  border: 1px solid #a99e70;
  border-radius: 5px;
  background: #f6f0dc;
}

.commands h2 {
  background: #e3dec0;
  font: 11px/18px 'Liberation Sans', Arial, sans-serif;
  color: #6d6650;
  text-align: center;
}

.command-cols {
  display: flex;
  padding: 1px 0;
  line-height: 18px;
}

.command-col {
  display: flex;
  flex-direction: column;
  padding: 0 11px 0 10px;
}

.command-col + .command-col {
  border-left: 1px solid #d6cfae;
}

.command-col a {
  color: #44310f;
}

.split {
  display: flex;
  align-items: center;
  gap: 7px;
  height: 10px;
  padding-left: 283px;
}

.split i,
.grip i {
  width: 3px;
  height: 3px;
  border: solid #b9b18c;
  border-width: 1px 0 0 1px;
}

.list {
  display: flex;
  flex: 1;
  flex-direction: column;
  min-height: 0;
  padding: 8px 18px 12px 14px;
  border: solid #b3a876;
  border-width: 1px 0 0 1px;
  border-radius: 5px 0 0;
  background: #fcfaeb;
}

/* command bars */
.bar {
  display: flex;
  flex: none;
  align-items: center;
  height: 24px;
  white-space: nowrap;
}

.bar .sep {
  background: #cdc49c;
}

.list .bar {
  margin: 6px 0 7px;
}

.tb {
  display: flex;
  flex: none;
  align-items: center;
  justify-content: center;
  width: 25px;
  height: 22px;
}

.tb.text {
  gap: 1px;
  width: auto;
  padding: 0 5px 0 3px;
}

.tb.drop {
  padding-right: 2px;
}

.caret {
  margin-left: 3px;
  border: 3px solid transparent;
  border-top-color: #44310f;
  border-bottom: 0;
}

.fill {
  flex: 1;
}

.primary {
  display: flex;
  align-items: center;
  height: 22px;
  padding: 0 6px;
  border: 1px solid #c3a356;
  border-radius: 3px;
  background: linear-gradient(#faeec6, #ecd69a 60%, #f0dca4);
  font-size: 12px;
  font-weight: bold;
  color: #3f2c05;
}

/* grids */
.grid-box {
  display: flex;
  flex: 1;
  min-height: 0;
  border: 1px solid #b3a876;
  background: #fff;
}

.grid-view {
  flex: 1;
  min-width: 0;
  overflow: hidden;
}

.docs,
.people {
  width: 100%;
  table-layout: fixed;
  border-spacing: 0;
}

.docs th,
.people th {
  height: 21px;
  padding: 0 4px;
  border: solid #c5ba8c;
  border-width: 0 1px 1px 0;
  background: linear-gradient(#fcfaf0, #eee7c8);
  font-weight: normal;
  color: #6b4f10;
  text-align: left;
}

.docs td,
.people td {
  height: 19px;
  padding: 0 4px;
  border: solid #c9d0d4;
  border-width: 0 1px 1px 0;
  color: #000;
  white-space: nowrap;
}

.docs th:last-child,
.docs td:last-child {
  border-right: 0;
}

.c-date {
  width: 128px;
}

.c-num {
  width: 217px;
}

.c-acc {
  width: 236px;
}

.sorted {
  display: flex;
  align-items: center;
  justify-content: space-between;
}

.sorted i {
  width: 12px;
  height: 7px;
  margin-right: 2px;
  background: repeating-linear-gradient(#a89e6c 0 2px, #e9e2c2 2px 3px);
  clip-path: polygon(35% 0, 65% 0, 100% 100%, 0 100%);
}

.docs tr:nth-child(odd) td {
  background: #f4faf6;
}

.docs .picked td,
.people .picked td {
  border-color: #b4cdea;
  background: #c7e0ff !important;
}

.docs .picked td:first-child,
.people .picked .n {
  background: #6f97cf !important;
  color: #fff;
}

.date {
  display: flex;
  align-items: center;
  gap: 4px;
}

/* scroll bars */
.vscroll {
  display: flex;
  flex: none;
  flex-direction: column;
  width: 16px;
  border-left: 1px solid #b3a876;
  background: #f8f7f0;
}

.hscroll {
  display: flex;
  flex: none;
  height: 17px;
  border: 1px solid #b3a876;
  border-top: 0;
  background: #f8f7f0;
}

.track {
  flex: 1;
}

.arrow {
  display: flex;
  flex: none;
  align-items: center;
  justify-content: center;
  width: 20px;
  height: 20px;
  background: linear-gradient(90deg, #fbf9ec, #efe9cf);
}

.vscroll .arrow {
  width: 15px;
}

.hscroll .arrow {
  height: 16px;
  background: linear-gradient(#fbf9ec, #efe9cf);
}

.arrow::after {
  border: 4px solid transparent;
  content: '';
}

.up::after {
  border-bottom: 7px solid #85858a;
  border-top: 0;
}

.down {
  border-top: 1px solid #b3a876;
}

.down::after {
  border-top: 7px solid #85858a;
  border-bottom: 0;
}

.left::after {
  border-right: 7px solid #85858a;
  border-left: 0;
}

.right-arrow {
  border-left: 1px solid #b3a876;
}

.right-arrow::after {
  border-left: 7px solid #85858a;
  border-right: 0;
}

.off::after {
  opacity: 0.4;
}

.thumb {
  display: flex;
  flex: none;
  align-items: center;
  justify-content: center;
  border: 1px solid #b3a876;
}

.thumb::after {
  width: 4px;
  height: 4px;
  border: solid #b9b18c;
  border-width: 1px 0 0 1px;
  content: '';
}

.vscroll .thumb {
  border-width: 1px 0;
  background: linear-gradient(90deg, #faf8e4, #ebe4bf);
}

.hscroll .thumb {
  border-width: 0 1px;
  background: linear-gradient(#faf8e4, #e3dcb2);
}

.short {
  height: 16px;
}

.mid {
  height: 35px;
}

.tall {
  height: 166px;
}

.corner {
  width: 16px;
  border-left: 1px solid #b3a876;
}

/* status */
.status {
  display: flex;
  flex: none;
  align-items: center;
  justify-content: space-between;
  height: 32px;
  padding-right: 37px;
  border-top: 1px solid #909090;
}

.history {
  width: 93px;
  height: 22px;
  border: 1px solid #888;
  border-radius: 3px;
  background: linear-gradient(#fff, #dcdddf);
  color: #333;
}

.news {
  display: flex;
  align-items: center;
  gap: 4px;
  color: #3f4c96;
}

/* windows */
.window {
  position: absolute;
  display: flex;
  flex-direction: column;
  padding: 0 5px 5px;
  border: 1px solid #77787a;
  border-radius: 7px 7px 0 0;
  background: #c6c7c9;
  box-shadow: inset 1px 1px 0 #e3e3e3;
}

.window .caption {
  margin: 0 -5px;
  border-radius: 6px 6px 0 0;
}

.window-body {
  flex: 1;
  min-height: 0;
  background: #fcfaeb;
}

.doc-window {
  top: 375px;
  right: 124px;
  bottom: 42px;
  left: 6px;
}

.doc-body {
  display: flex;
}

.doc-side {
  display: flex;
  flex: none;
  flex-direction: column;
  width: 60px;
  padding: 9px 0 0 10px;
  overflow: hidden;
  border-right: 1px solid #b3a876;
  background: linear-gradient(90deg, #f6f2de, #ece4c6);
  line-height: 18px;
}

.goto {
  width: 36px;
  margin-top: 9px;
  overflow: hidden;
  border-bottom: 1px solid #a09468;
  font-size: 12px;
  font-weight: bold;
  line-height: 14px;
  color: #958b68;
}

.doc-side .apart {
  margin-top: 7px;
}

.grip {
  display: flex;
  flex-direction: column;
  gap: 7px;
  align-self: flex-end;
  margin: 142px 3px 0 0;
}

.doc-form {
  display: flex;
  flex: 1;
  flex-direction: column;
  min-width: 0;
  padding: 6px 16px 5px 12px;
}

.form-bar {
  margin: 9px 0 7px;
}

.form-bar .primary {
  margin-right: 1px;
}

.field {
  display: flex;
  flex: none;
  align-items: center;
  height: 19px;
  margin-bottom: 6px;
}

.field label {
  flex: none;
  width: 88px;
}

.field > input,
.combo {
  flex: 1;
  min-width: 0;
  height: 19px;
  border: 1px solid #b3a876;
  border-radius: 4px;
  background: #fff;
}

input {
  padding: 0 2px;
  font: 11px/13px 'Liberation Sans', Arial, sans-serif;
  color: #000;
  outline: none;
}

.field > .readonly {
  background: #fcfaeb;
}

.combo {
  display: flex;
  overflow: hidden;
}

.combo input {
  flex: 1;
  min-width: 0;
  border: 0;
}

.combo button {
  display: flex;
  align-items: center;
  justify-content: center;
  width: 15px;
  border-left: 1px solid #d9d2b0;
  background: #f5f0da;
  color: #6a500f;
}

.combo svg {
  width: 14px;
  height: 14px;
}

.combo .dots {
  font-weight: bold;
}

h3 {
  display: flex;
  align-items: center;
  gap: 4px;
  margin-bottom: 6px;
  font: 11px/13px 'Liberation Sans', Arial, sans-serif;
  color: #a8741c;
}

h3::after {
  flex: 1;
  height: 1px;
  background: #b3a876;
  content: '';
}

.people-bar {
  margin: 0 0 6px -2px;
}

.people-box {
  display: flex;
  flex: 1;
  flex-direction: column;
  min-height: 0;
  margin-bottom: 7px;
}

.people th {
  padding-top: 4px;
  line-height: 13px;
  vertical-align: top;
}

.people td {
  height: 57px;
  padding-top: 4px;
  vertical-align: top;
}

.people .n {
  text-align: right;
}

.people p {
  height: 19px;
}

.people .lined {
  padding: 0;
}

.people .lined p {
  padding: 4px 4px 0;
  border-bottom: 1px solid #eeeff0;
}

.people .picked .lined p {
  border-color: #b9d5f5;
}

.c-n {
  width: 48px;
}

.c-p {
  width: 150px;
}

.c-to {
  width: 160px;
}

.people-box .wide {
  width: 646px;
}

/* report */
.report-window {
  top: 302px;
  left: 696px;
  width: 557px;
  height: 430px;
}

.report-body {
  display: flex;
  flex-direction: column;
  padding: 6px 17px 13px 11px;
}

.period-label {
  margin: 12px 0 6px;
}

.combo.period {
  flex: none;
  width: 80px;
}

.period input::selection {
  background: #4b69bd;
  color: #fff;
}

.report-bar {
  margin: 7px 0 6px;
}

.report-bar .primary {
  padding: 0 5px;
}

.report-bar .form-btn {
  margin: 0 15px 0 9px;
}

.sheet-box {
  display: flex;
  flex: 1;
  flex-direction: column;
  min-height: 0;
  border-top: 1px solid #b3a876;
}

.sheet-row {
  display: flex;
  flex: 1;
  min-height: 0;
  border: solid #b3a876;
  border-width: 0 1px 1px;
}

.gutter {
  flex: none;
  width: 29px;
  border-right: 1px solid #b3a876;
}

.gutter-top {
  display: flex;
  flex-direction: column;
  height: 199px;
  padding: 91px 0 0 3px;
  border-bottom: 1px solid #b3a876;
}

.fold {
  display: flex;
  align-items: center;
  justify-content: center;
  width: 11px;
  height: 11px;
  border: 1px solid #a99e70;
  background: #fff;
}

.fold::after {
  width: 6px;
  height: 1px;
  background: #44310f;
  content: '';
}

.bracket {
  width: 5px;
  height: 52px;
  margin-left: 5px;
  border: solid #b3a876;
  border-width: 0 0 1px 1px;
}

.sheet {
  flex: 1;
  min-width: 0;
  overflow: hidden;
  background: #fff;
  color: #000;
  white-space: nowrap;
}

.pinned {
  height: 22px;
  padding-left: 4px;
  border-bottom: 3px solid #d5daee;
  background: #eceef8;
  font: bold 16px/20px 'Liberation Sans', Arial, sans-serif;
}

.sheet h2 {
  padding: 38px 0 16px 5px;
  font: bold 24px/28px 'Liberation Sans', Arial, sans-serif;
}

.sheet dl {
  display: grid;
  grid-template-columns: 88px 1fr;
  padding: 0 0 13px 3px;
  font-size: 13px;
  line-height: 16px;
}

.deep {
  padding-left: 16px;
}

.born {
  width: 462px;
  table-layout: fixed;
  border-spacing: 0;
  border-top: 1px solid #c2b777;
}

.born th {
  height: 33px;
  padding: 0 3px;
  border: solid #c2b777;
  border-width: 0 1px 1px 0;
  background: #f2ebc5;
  font-size: 13px;
  font-weight: normal;
  line-height: 16px;
  text-align: left;
  vertical-align: top;
  white-space: normal;
}

.born td {
  height: 15px;
  padding: 0 2px;
  border: solid #c2b777;
  border-width: 0 1px 1px 0;
}

.c-addr {
  width: 168px;
}

.c-fio {
  width: 210px;
}

.report-body .wide {
  width: 360px;
}
</style>
